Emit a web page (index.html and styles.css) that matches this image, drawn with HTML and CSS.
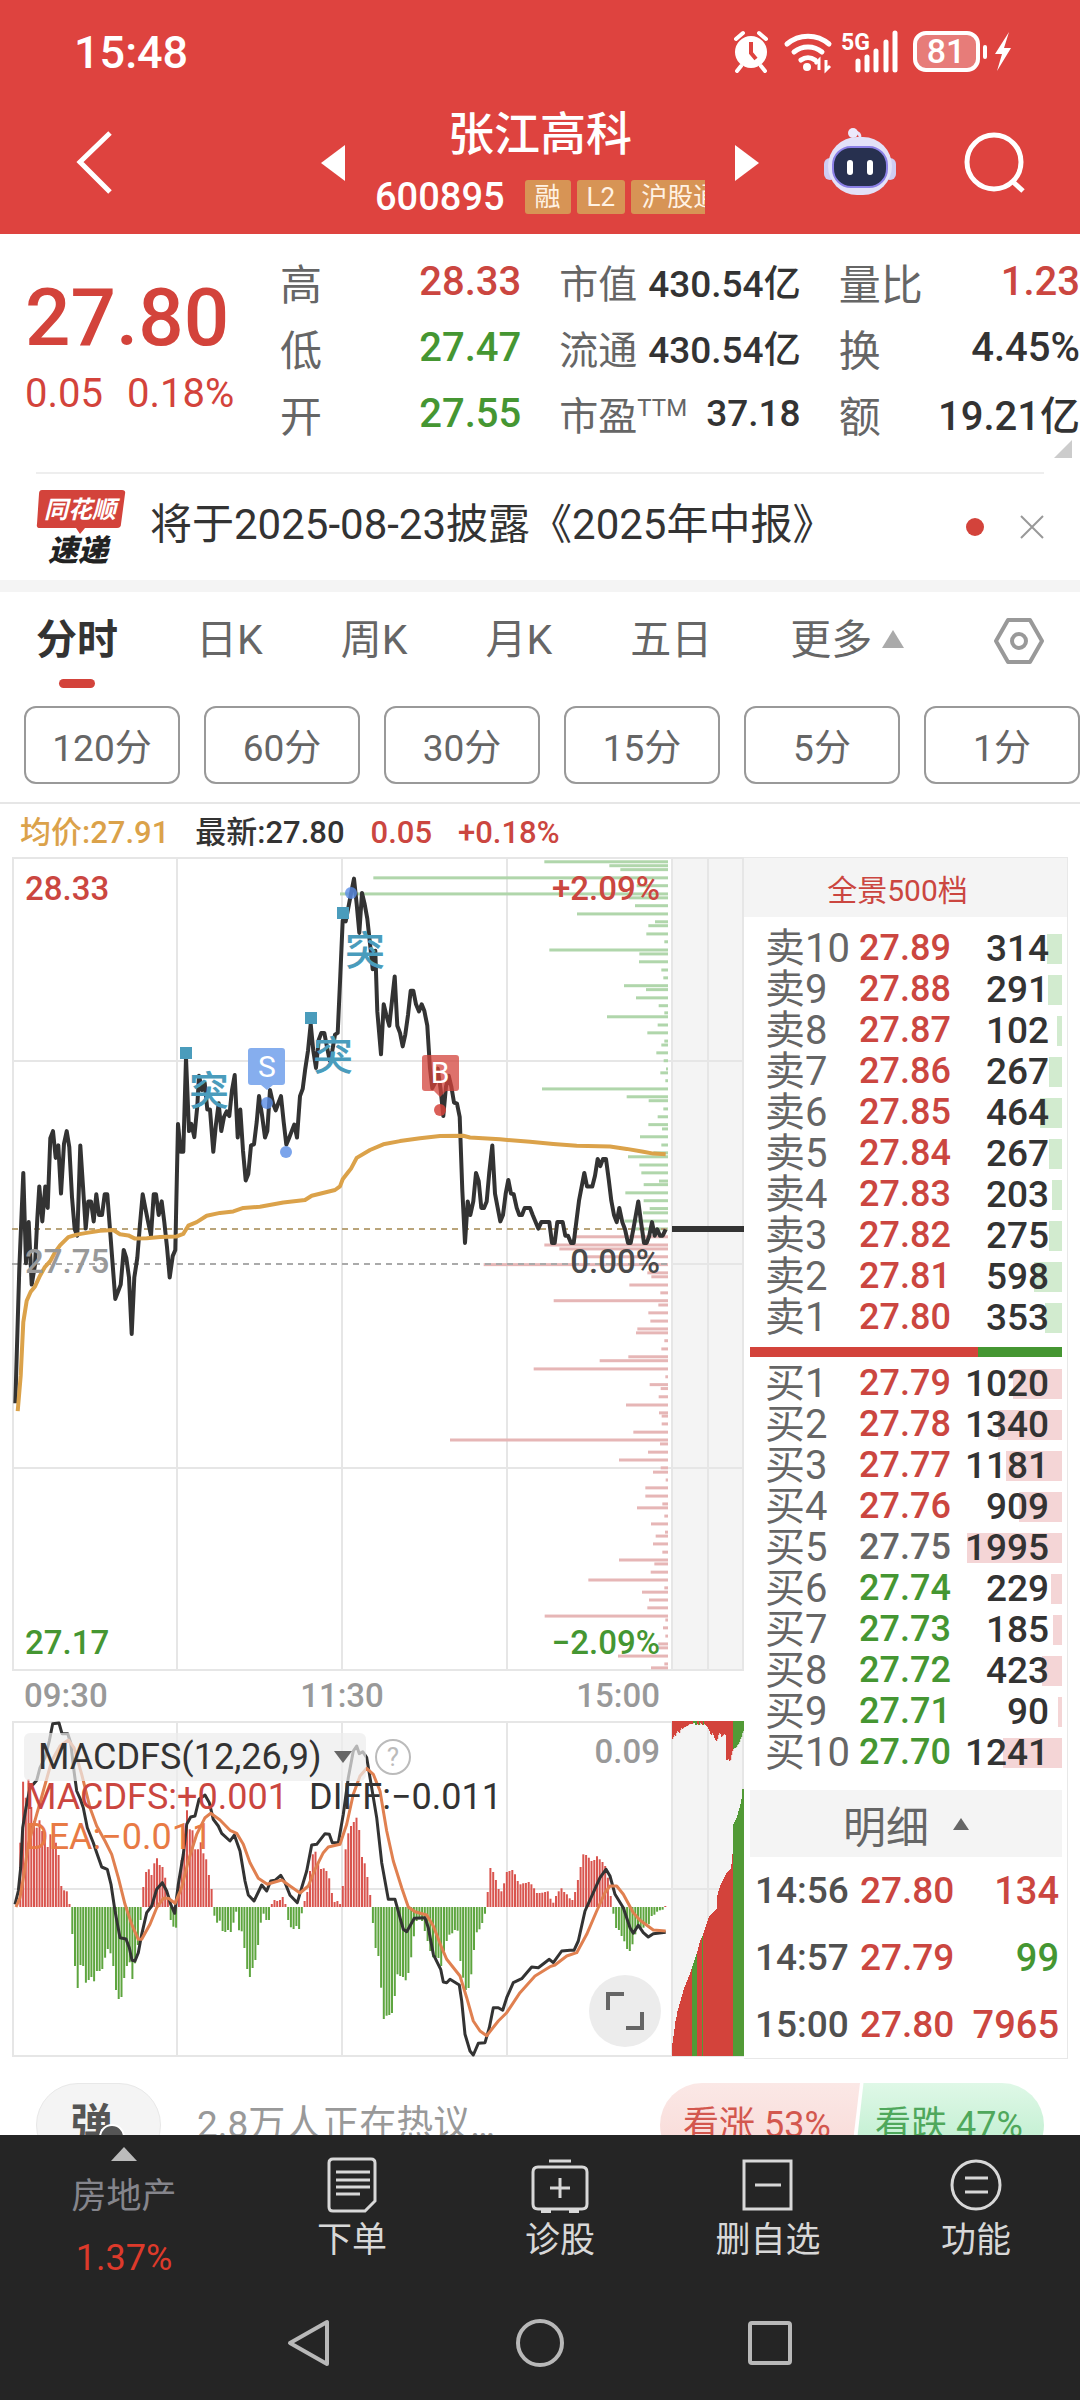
FILE: index.html
```html
<!DOCTYPE html>
<html lang="zh-CN">
<head>
  <meta charset="UTF-8">
  <meta name="viewport" content="width=device-width,initial-scale=1">
  <title>张江高科 600895</title>
  <link rel="stylesheet" href="styles.css">
</head>
<body>
<header class="top">
  <div class="status">
    <span class="clock">15:48</span>
    <svg class="status-icons" viewBox="0 0 284 44" width="284" height="44" aria-hidden="true">
      <!-- alarm -->
      <circle cx="17" cy="22" r="16" fill="#fff"/>
      <path d="M2 9 9 3M32 9l-7-6M7 36l-4 5M27 36l4 5" stroke="#fff" stroke-width="4" stroke-linecap="round"/>
      <path d="M17 12v11l5 6" fill="none" stroke="#de433f" stroke-width="4"/>
      <!-- wifi -->
      <path d="M53 14a32 32 0 0 1 42 0M60 22a22 22 0 0 1 28 0M67 30a12 12 0 0 1 14 0" fill="none" stroke="#fff" stroke-width="5" stroke-linecap="round"/>
      <circle cx="73" cy="37" r="4" fill="#fff"/>
      <path d="M85 40V30l-4 4M92 30v10l4-4" fill="none" stroke="#fff" stroke-width="3"/>
      <!-- signal -->
      <text x="107" y="20" class="net">5G</text>
      <path d="M124 40v-9M133 40v-13M142 40V21M152 40V12M161 40V3" stroke="#fff" stroke-width="5" stroke-linecap="round"/>
      <!-- battery -->
      <rect x="181" y="3" width="63" height="37" rx="11" fill="#e77c79" stroke="#fff" stroke-width="4"/>
      <text x="212" y="33" class="batt">81</text>
      <rect x="249" y="15" width="4" height="14" rx="2" fill="#fff"/>
      <path d="M275 2l-14 22h7l-5 17 14-23h-7z" fill="#fff"/>
    </svg>
  </div>
  <div class="title-row">
    <div class="side">
      <button class="icon-btn" aria-label="返回">
        <svg viewBox="0 0 40 68" width="40" height="68"><path d="M36 4 6 33l30 30" fill="none" stroke="#fff" stroke-width="5"/></svg>
      </button>
    </div>
    <div class="switcher">
      <button class="icon-btn" aria-label="上一只"><svg viewBox="0 0 24 36" width="24" height="36"><path d="M24 0v36L0 18z" fill="#fff"/></svg></button>
      <div class="stock">
        <h1>张江高科</h1>
        <div class="stock-sub">
          <span class="code">600895</span>
          <span class="tag">融</span>
          <span class="tag">L2</span>
          <span class="tag">沪股通</span>
        </div>
      </div>
      <button class="icon-btn" aria-label="下一只"><svg viewBox="0 0 24 36" width="24" height="36"><path d="M0 0v36l24-18z" fill="#fff"/></svg></button>
    </div>
    <div class="side right">
      <button class="icon-btn" aria-label="智能助手">
        <svg viewBox="0 0 72 72" width="72" height="72">
          <path d="M36 12q1-7-6-7" fill="none" stroke="#e8e4fa" stroke-width="3"/>
          <circle cx="29" cy="6" r="5" fill="#ece9fb"/>
          <rect x="0" y="31" width="12" height="22" rx="6" fill="#cfcdf3"/>
          <rect x="60" y="31" width="12" height="22" rx="6" fill="#cfcdf3"/>
          <rect x="4" y="10" width="64" height="58" rx="29" fill="#e3e1f8"/>
          <rect x="9" y="20" width="54" height="40" rx="18" fill="#27304f" stroke="#8b80e6" stroke-width="2"/>
          <rect x="23" y="33" width="6" height="15" rx="3" fill="#fff"/>
          <rect x="43" y="33" width="6" height="15" rx="3" fill="#fff"/>
        </svg>
      </button>
      <button class="icon-btn" aria-label="搜索">
        <svg viewBox="0 0 62 62" width="62" height="62"><circle cx="30" cy="30" r="27" fill="none" stroke="#fff" stroke-width="5"/><path d="M48 49l11 10" stroke="#fff" stroke-width="5"/></svg>
      </button>
    </div>
  </div>
</header>

<section class="quote">
  <div class="now">
    <div class="price">27.80</div>
    <div class="change"><span>0.05</span><span>0.18%</span></div>
  </div>
  <dl class="stats">
    <div><dt>高</dt><dd class="up">28.33</dd></div>
    <div class="md"><dt>市值</dt><dd>430.54亿</dd></div>
    <div><dt>量比</dt><dd class="up">1.23</dd></div>
    <div><dt>低</dt><dd class="down">27.47</dd></div>
    <div class="md"><dt>流通</dt><dd>430.54亿</dd></div>
    <div><dt>换</dt><dd>4.45%</dd></div>
    <div><dt>开</dt><dd class="down">27.55</dd></div>
    <div class="md"><dt>市盈<sup>TTM</sup></dt><dd>37.18</dd></div>
    <div><dt>额</dt><dd>19.21亿</dd></div>
  </dl>
  <span class="corner"></span>
</section>

<section class="news">
  <svg viewBox="0 0 92 74" width="92" height="74" role="img" aria-label="同花顺速递">
    <path d="M6 0h80q4 0 3 4l-4 30q0 4-4 4H49l-5 6-4-6H4q-4 0-3-4L3 4q0-4 3-4z" fill="#d3433b"/>
    <text x="44" y="28" class="logo-a">同花顺</text>
    <text x="42" y="71" class="logo-b">速递</text>
  </svg>
  <a class="headline" href="#news">将于2025-08-23披露《2025年中报》</a>
  <span class="dot"></span>
  <button class="icon-btn" aria-label="关闭"><svg viewBox="0 0 24 24" width="24" height="24"><path d="M1 1l22 22M23 1 1 23" stroke="#999" stroke-width="2"/></svg></button>
</section>

<nav class="tabs">
  <button class="tab active">分时</button>
  <button class="tab">日K</button>
  <button class="tab">周K</button>
  <button class="tab">月K</button>
  <button class="tab">五日</button>
  <button class="tab more">更多<svg viewBox="0 0 22 18" width="22" height="18"><path d="M11 0l11 18H0z" fill="#aaa"/></svg></button>
  <button class="tab setting" aria-label="设置">
    <svg viewBox="0 0 50 46" width="50" height="46" fill="none" stroke="#999" stroke-width="4"><path d="M14 2h22l12 21-12 21H14L2 23z" stroke-linejoin="round"/><circle cx="25" cy="23" r="7"/></svg>
  </button>
</nav>

<div class="periods">
  <button>120分</button>
  <button>60分</button>
  <button>30分</button>
  <button>15分</button>
  <button>5分</button>
  <button>1分</button>
</div>

<div class="legend">
  <span class="avg">均价:27.91</span>
  <span>最新:27.80</span>
  <span class="up">0.05</span>
  <span class="up">+0.18%</span>
</div>

<main class="board">
  <div class="charts">
    <svg id="trend" viewBox="12 17 732 814" role="img" aria-label="分时走势">
      <rect x="672" y="18" width="72" height="813" fill="#f4f4f4"/>
      <g class="grid">
        <path d="M13 18V831M177 18V831M342 18V831M507 18V831M672 18V831M708 18V831M743 18V831"/>
        <path d="M12 18H744M12 221H744M672 424H744M12 628H744M12 830H744"/>
      </g>
      <g id="levels"></g>
      <path d="M12 389H670" stroke="#b9a47a" stroke-width="2" stroke-dasharray="6 5"/>
      <path d="M12 424H670" stroke="#aaa" stroke-width="2" stroke-dasharray="6 5"/>
      <path id="price-line" fill="none" stroke="#333" stroke-width="4" stroke-linejoin="round"/>
      <path id="avg-line" fill="none" stroke="#dba24a" stroke-width="4" stroke-linejoin="round"/>
      <path d="M672 389H744" stroke="#333" stroke-width="6"/>
      <g fill="#4a9cbc">
        <path d="M180 207h12v12h-12zM305 172h12v12h-12zM337 67h12v12h-12z"/>
        <text x="189" y="265" class="mark">突</text>
        <text x="313" y="230" class="mark">突</text>
        <text x="345" y="125" class="mark">突</text>
      </g>
      <g fill="#5a8de6" fill-opacity=".8">
        <circle cx="351" cy="53" r="6"/>
        <circle cx="267" cy="263" r="6"/>
        <circle cx="286" cy="312" r="6"/>
      </g>
      <path d="M251 208h31q3 0 3 3v31q0 3-3 3h-9l-6 5-6-5h-10q-3 0-3-3v-31q0-3 3-3z" fill="#86aeee"/>
      <text x="267" y="237" class="flag">S</text>
      <path d="M425 215h31q3 0 3 3v30q0 3-3 3h-10l-6 6-6-6h-9q-3 0-3-3v-30q0-3 3-3z" fill="#d3433b" fill-opacity=".75"/>
      <circle cx="440" cy="270" r="6" fill="#d3433b" fill-opacity=".85"/>
      <text x="440" y="243" class="flag">B</text>
      <text x="25" y="60" class="lab up">28.33</text>
      <text x="660" y="60" class="lab up end">+2.09%</text>
      <text x="25" y="433" class="lab flat">27.75</text>
      <text x="660" y="433" class="lab mid end">0.00%</text>
      <text x="25" y="814" class="lab down">27.17</text>
      <text x="660" y="814" class="lab down end">−2.09%</text>
    </svg>
    <div class="axis"><span>09:30</span><span>11:30</span><span>15:00</span></div>
    <div class="macd">
      <svg id="macd" viewBox="12 10 732 336" role="img" aria-label="MACDFS">
        <rect x="672" y="10" width="72" height="335" fill="#f4f4f4"/>
        <g class="grid">
          <path d="M13 10V345M177 10V345M342 10V345M507 10V345M672 10V345M708 10V345M743 10V345"/>
          <path d="M12 11H744M12 178H744M12 345H744"/>
        </g>
        <g id="macd-bars"></g>
        <path id="diff-line" fill="none" stroke="#333" stroke-width="3" stroke-linejoin="round"/>
        <path id="dea-line" fill="none" stroke="#e08050" stroke-width="3" stroke-linejoin="round"/>
        <g id="auction"></g>
        <text x="25" y="98" class="ind up">MACDFS:+0.001</text>
        <text x="309" y="98" class="ind">DIFF:−0.011</text>
        <text x="25" y="138" class="ind dea">DEA:−0.011</text>
        <text x="660" y="52" class="lab flat end">0.09</text>
      </svg>
      <button class="ind-name">MACDFS(12,26,9)<svg viewBox="0 0 18 12" width="18" height="12"><path d="M0 0h18l-9 12z" fill="#666"/></svg></button>
      <button class="help" aria-label="说明">?</button>
      <button class="expand" aria-label="全屏"><svg viewBox="0 0 38 38" width="38" height="38" fill="none" stroke="#666" stroke-width="4"><path d="M2 18V2h16M36 20v16H20"/></svg></button>
    </div>
  </div>

  <aside class="orders">
    <button class="all-levels">全景500档</button>
    <table class="book" id="sell"><tbody></tbody></table>
    <div class="ratio"><span class="buy" style="width:73%"></span></div>
    <table class="book" id="buy"><tbody></tbody></table>
    <button class="detail-head">明细<svg viewBox="0 0 16 12" width="16" height="12"><path d="M8 0l8 12H0z" fill="#666"/></svg></button>
    <table class="trades">
      <tr><td>14:56</td><td class="up">27.80</td><td class="up">134</td></tr>
      <tr><td>14:57</td><td class="up">27.79</td><td class="down">99</td></tr>
      <tr><td>15:00</td><td class="up">27.80</td><td class="up">7965</td></tr>
    </table>
  </aside>
</main>

<section class="talk">
  <button class="danmu" aria-label="弹幕开关">弹<i></i></button>
  <span class="talk-text">2.8万人正在热议…</span>
  <div class="vote">
    <button class="bull">看涨 53%</button>
    <button class="bear">看跌 47%</button>
  </div>
</section>

<footer>
  <nav class="actions">
    <a class="sector" href="#sector">
      <svg viewBox="0 0 26 14" width="26" height="14"><path d="M13 0l13 14H0z" fill="#bbb"/></svg>
      <span>房地产</span>
      <b>1.37%</b>
    </a>
    <a href="#order">
      <svg viewBox="0 0 56 56" width="56" height="56"><path d="M9 2h38q4 0 4 4v38L41 54H9q-4 0-4-4V6q0-4 4-4zM12 15h34M12 23h34M12 30h34M12 37h24"/></svg>
      <span>下单</span>
    </a>
    <a href="#diagnose">
      <svg viewBox="0 0 60 56" width="60" height="56"><path d="M19 4h22M8 10h44q5 0 5 5v32q0 5-5 5H8q-5 0-5-5V15q0-5 5-5zM30 21v20M20 31h20"/><path d="M11 54h10M39 54h10" stroke-width="4"/></svg>
      <span>诊股</span>
    </a>
    <a href="#remove">
      <svg viewBox="0 0 56 56" width="56" height="56"><path d="M4 4h47v48H4zM15 28h26"/></svg>
      <span>删自选</span>
    </a>
    <a href="#more">
      <svg viewBox="0 0 56 56" width="56" height="56"><circle cx="28" cy="28" r="24"/><path d="M17 21h23M17 35h23"/></svg>
      <span>功能</span>
    </a>
  </nav>
  <div class="sysnav">
    <button class="icon-btn" aria-label="后退"><svg viewBox="0 0 48 48" width="48" height="48"><path d="M41 3v42L4 24z"/></svg></button>
    <button class="icon-btn" aria-label="主屏"><svg viewBox="0 0 48 48" width="48" height="48"><circle cx="24" cy="24" r="22"/></svg></button>
    <button class="icon-btn" aria-label="最近"><svg viewBox="0 0 48 48" width="48" height="48"><rect x="4" y="4" width="40" height="40" rx="2"/></svg></button>
  </div>
</footer>
<script src="script.js"></script>
</body>
</html>
```

FILE: styles.css
```css
* { box-sizing: border-box; margin: 0; padding: 0 }
body {
  font-family: Roboto, "Noto Sans CJK SC", sans-serif;
  background: #fff;
  color: #333;
  overflow-x: hidden;
}
button {
  font: inherit;
  color: inherit;
  background: none;
  border: 0;
}
a { color: inherit; text-decoration: none }
svg { display: block }
.icon-btn { display: flex }
.up { color: #cb4640; fill: #cb4640 }
.down { color: #459632; fill: #459632 }

/* header */
.top { background: #de433f; color: #fff; padding-bottom: 12px }
.status {
  display: flex;
  justify-content: space-between;
  align-items: center;
  height: 104px;
  padding: 0 62px 0 74px;
}
.clock { font-size: 45px; font-weight: 500 }
.net { font-size: 23px; font-weight: 700; fill: #fff }
.batt { font-size: 34px; font-weight: 500; fill: #fff; text-anchor: middle }
.title-row {
  display: grid;
  grid-template-columns: 1fr auto 1fr;
  align-items: center;
  height: 118px;
}
.side { padding-left: 74px }
.side.right {
  display: flex;
  align-items: center;
  justify-content: flex-end;
  gap: 68px;
  padding: 0 54px 0 0;
}
.switcher { display: flex; align-items: center; gap: 30px }
.stock { width: 330px; text-align: center }
.stock h1 { font-size: 46px; font-weight: 500; line-height: 60px }
.stock-sub {
  display: flex;
  align-items: center;
  gap: 6px;
  height: 58px;
  padding-top: 8px;
  overflow: hidden;
  white-space: nowrap;
}
.code { font-size: 38px; font-weight: 500; margin-right: 14px }
.tag {
  flex: none;
  font-size: 26px;
  line-height: 34px;
  padding: 0 10px;
  background: #d79455;
  color: #fff2e4;
  border-radius: 3px;
}

/* quote */
.quote { position: relative; display: flex; height: 238px; padding-top: 14px }
.now { width: 280px; padding-left: 25px; color: #d3433b }
.price { font-size: 80px; font-weight: 500; line-height: 92px; margin-top: 24px }
.change { display: flex; gap: 24px; font-size: 40px; line-height: 60px }
.stats {
  flex: 1;
  display: grid;
  grid-template-columns: repeat(3, 1fr);
  grid-auto-rows: 66px;
  column-gap: 38px;
}
.stats div { display: flex; justify-content: space-between; align-items: center; white-space: nowrap }
.stats dt { font-size: 42px; color: #666 }
.stats dd { font-size: 40px; font-weight: 500 }
.stats .md dt { font-size: 39px }
.stats .md dd { font-size: 37px }
.stats sup { font-size: 24px; vertical-align: 14px; line-height: 1 }
.corner {
  position: absolute;
  right: 8px;
  bottom: 14px;
  border-left: 18px solid transparent;
  border-bottom: 18px solid #ccc;
}

/* news */
.news {
  display: flex;
  align-items: center;
  height: 108px;
  margin: 0 36px;
  border-top: 2px solid #eee;
}
.logo-a { font-size: 24px; font-weight: 700; font-style: italic; fill: #fff; text-anchor: middle }
.logo-b { font-size: 30px; font-weight: 900; font-style: italic; fill: #222; text-anchor: middle }
.headline { flex: 1; margin-left: 22px; font-size: 42px; line-height: 60px; padding-bottom: 4px; white-space: nowrap }
.dot { width: 18px; height: 18px; border-radius: 50%; background: #d3433b; margin-right: 36px }

/* period tabs */
.tabs {
  display: flex;
  gap: 78px;
  padding: 0 36px;
  height: 126px;
  border-top: 12px solid #f4f4f4;
}
.tab {
  display: flex;
  flex-direction: column;
  align-items: center;
  height: 96px;
  padding-top: 18px;
  font-size: 41px;
  line-height: 60px;
  color: #666;
  white-space: nowrap;
}
.tab.active { color: #333; font-weight: 700 }
.tab.active::after {
  content: "";
  width: 36px;
  height: 9px;
  margin-top: 9px;
  border-radius: 5px;
  background: #d3433b;
}
.tab.more { flex-direction: row; align-items: flex-start; gap: 10px }
.tab.more svg { margin-top: 20px }
.tab.setting { margin-left: auto; padding-top: 26px }
.periods { display: flex; gap: 24px; padding: 0 0 18px 24px; border-bottom: 2px solid #e6e6e6 }
.periods button {
  flex: 1;
  height: 78px;
  border: 2px solid #999;
  border-radius: 12px;
  font-size: 37px;
  color: #666;
}
.legend {
  display: flex;
  gap: 26px;
  height: 53px;
  padding: 0 20px;
  font-size: 31px;
  font-weight: 500;
  line-height: 58px;
}
.legend .avg { color: #dba24a }

/* charts */
.board { display: grid; grid-template-columns: 1fr 324px; padding: 0 12px }
.charts > svg, .macd > svg { width: 100%; height: auto }
.grid { fill: none; stroke: #e6e6e6; stroke-width: 2 }
.lab { font-size: 33px; font-weight: 500 }
.end { text-anchor: end }
.flat { fill: #999 }
.mid { fill: #4a4a4a }
.mark { font-size: 40px; font-weight: 500 }
.flag { font-size: 30px; fill: #fff; text-anchor: middle }
.axis {
  display: flex;
  justify-content: space-between;
  padding: 0 84px 0 12px;
  font-size: 33px;
  font-weight: 500;
  line-height: 50px;
  color: #999;
}
.macd { position: relative }
.ind { font-size: 36px }
.ind:not(.up) { fill: #333 }
.ind.ind.dea { fill: #e87a45 }
.ind-name {
  position: absolute;
  left: 12px;
  top: 12px;
  display: flex;
  align-items: center;
  gap: 12px;
  height: 48px;
  padding: 0 14px;
  font-size: 36px;
  background: rgba(236, 236, 236, .7);
  border-radius: 6px;
}
.help {
  position: absolute;
  left: 363px;
  top: 18px;
  width: 36px;
  height: 36px;
  border: 2px solid #bbb;
  border-radius: 50%;
  font-size: 26px;
  line-height: 32px;
  color: #bbb;
}
.expand {
  position: absolute;
  right: 83px;
  bottom: 10px;
  width: 72px;
  height: 72px;
  border-radius: 50%;
  background: #ececec;
  display: flex;
  align-items: center;
  justify-content: center;
}

/* order book */
.orders { border: 1px solid #e8e8e8; border-left: 0 }
.all-levels {
  width: 100%;
  height: 59px;
  padding-right: 16px;
  background: #f4f4f4;
  color: #cb4640;
  font-size: 30px;
}
.orders table { border-collapse: collapse; width: 100% }
.book { table-layout: fixed; margin-top: 11px }
.book td { height: 41px; line-height: 41px; white-space: nowrap }
.book td:first-child { width: 115px; padding-left: 21px; font-size: 40px; color: #666 }
.book .p { width: 92px; font-size: 36px; font-weight: 500 }
.book .p.same { color: #666 }
.qty { position: relative; padding-right: 18px; text-align: right; font-size: 37px; font-weight: 500 }
.qty i { position: absolute; right: 5px; top: 6px; height: 30px; z-index: -1 }
#sell i { background: #d2ebcf }
#buy i { background: #f4d5d6 }
.ratio { height: 10px; margin: 9px 5px 0 6px; background: #459632 }
.ratio .buy { display: block; height: 100%; background: #d3433b }
#buy { margin-top: 6px }
.detail-head {
  display: flex;
  align-items: center;
  justify-content: center;
  gap: 24px;
  min-width: 312px;
  height: 67px;
  margin: 17px 5px 0 6px;
  background: #f4f4f4;
  color: #666;
  font-size: 43px;
}
.trades td { height: 67px; font-size: 37px; font-weight: 500; color: #505050 }
.trades td.up { color: #cb4640 }
.trades td.down { color: #459632 }
.trades td:first-child { width: 116px; padding-left: 11px }
.trades td:last-child { text-align: right; padding-right: 8px; font-size: 38px }

/* comments strip, covered by the footer */
.talk {
  display: flex;
  align-items: flex-start;
  height: 76px;
  padding: 24px 36px 0;
  overflow: hidden;
}
.danmu {
  position: relative;
  flex: none;
  width: 125px;
  height: 84px;
  border: 1px solid #e8e8e8;
  border-radius: 42px;
  background: #f4f4f4;
  font-size: 42px;
  font-weight: 700;
  line-height: 76px;
  padding-right: 14px;
  color: #555;
}
.danmu i {
  position: absolute;
  left: 62px;
  top: 40px;
  width: 26px;
  height: 26px;
  border: 2px solid #fff;
  border-radius: 50%;
  background: #555;
}
.talk-text { flex: 1; margin-left: 36px; font-size: 37px; line-height: 84px; color: #999 }
.vote { display: flex; font-size: 36px }
.vote button { height: 84px; line-height: 84px }
.bull {
  width: 200px;
  padding-right: 6px;
  border-radius: 42px 0 0 42px;
  background: linear-gradient(#fbe8e6, #f8d8d5);
  clip-path: polygon(0 0, 100% 0, 95% 100%, 0 100%);
  color: #d3574e;
}
.bear {
  width: 190px;
  margin-left: -6px;
  border-radius: 0 42px 42px 0;
  background: linear-gradient(#dff8e7, #b8ecca);
  clip-path: polygon(5% 0, 100% 0, 100% 100%, 0 100%);
  color: #4fa85c;
}

/* footer */
footer { position: relative; height: 267px; background: #252525; color: #d8d8d8 }
.actions { display: grid; grid-template-columns: 248px repeat(4, 1fr) }
.actions a { display: flex; flex-direction: column; align-items: center; padding-top: 22px; font-size: 35px; line-height: 56px }
.actions svg { fill: none; stroke: #d8d8d8; stroke-width: 3 }
.actions a.sector { padding-top: 12px; color: #85858c }
.actions .sector svg { stroke: none }
.sector span { margin-top: 8px }
.sector b { font-size: 36px; font-weight: 400; line-height: 66px; color: #dd3a2b }
.sysnav { display: flex; justify-content: center; gap: 182px; margin-top: 28px }
.sysnav svg { fill: none; stroke: #b8b8b8; stroke-width: 4; stroke-linejoin: round }
```

FILE: script.js
```js
const NS = 'http://www.w3.org/2000/svg';
const byId = id => document.getElementById(id);

// samples are flat x,y lists; sx / sy are units per chart pixel
function toPath(flat, sx, sy) {
  let d = '';
  for (let i = 0; i < flat.length; i += 2) {
    d += (i ? 'L' : 'M') + (flat[i] / sx).toFixed(1) + ' ' + (flat[i + 1] / sy).toFixed(1);
  }
  return d;
}
function add(parent, tag, attrs) {
  const el = document.createElementNS(NS, tag);
  for (const k in attrs) el.setAttribute(k, attrs[k]);
  parent.appendChild(el);
}

const price = [46,1577,58,1200,70,932,78,1185,86,1070,95,1245,105,1190,112,1060,118,970,127,1068,136,970,143,1030,151,835,159,815,
  167,890,175,855,183,990,192,850,200,815,208,860,216,1000,224,1090,232,1108,241,855,249,970,257,1088,265,1012,273,1012,281,1068,
  289,992,297,1050,306,1050,314,992,322,992,330,1090,338,1190,346,1285,354,1265,362,1245,371,1148,379,1170,387,1225,395,1383,
  403,1225,412,1170,420,1075,428,992,436,1030,444,1068,453,1108,461,992,468,992,476,1050,485,1012,493,1070,501,1140,509,1225,
  518,1165,526,1148,534,795,542,873,550,873,558,610,567,815,574,795,583,832,592,745,597,660,606,700,614,680,622,755,630,755,
  640,873,648,795,656,737,664,815,672,775,680,760,688,773,696,700,704,658,713,833,721,755,729,870,737,953,745,935,753,855,
  762,852,770,790,777,717,786,770,795,833,802,815,810,700,819,737,827,757,835,737,843,717,851,790,859,853,867,835,875,815,
  883,797,891,833,900,717,908,697,916,640,924,590,932,515,940,590,948,638,956,560,964,540,973,540,981,580,989,618,997,590,
  1005,545,1013,540,1021,380,1028,225,1037,228,1045,190,1053,150,1062,108,1070,180,1078,260,1086,148,1094,180,1102,220,
  1110,290,1118,362,1126,310,1132,480,1143,600,1151,460,1159,490,1168,520,1176,450,1184,382,1192,520,1200,540,1208,578,
  1216,545,1224,490,1232,422,1240,422,1248,460,1257,480,1265,460,1273,478,1282,520,1290,640,1297,695,1305,680,1313,640,
  1322,700,1330,773,1338,690,1346,660,1354,690,1362,735,1371,738,1379,775,1387,980,1395,1128,1403,1012,1411,1050,1420,1012,
  1428,932,1436,955,1444,1030,1452,1030,1460,1012,1468,930,1477,855,1485,990,1493,1030,1501,1068,1509,1050,1517,990,1525,952,
  1533,990,1541,992,1550,1030,1558,1050,1566,1050,1574,1030,1590,1030,1598,1050,1615,1088,1624,1070,1648,1070,1656,1128,
  1664,1128,1672,1070,1688,1070,1696,1108,1704,1108,1713,1128,1721,1128,1729,1070,1737,1010,1753,932,1761,970,1777,970,
  1785,940,1793,893,1801,913,1809,893,1818,893,1826,950,1834,1010,1842,1050,1850,1070,1858,1030,1867,1070,1875,1090,
  1884,1128,1892,1128,1900,1090,1915,1012,1923,1070,1932,1128,1940,1128,1948,1108,1956,1070,1964,1108,1972,1090,1980,1108,
  1988,1108,1997,1090];
const avg = [53,1599,62,1500,70,1350,80,1290,92,1265,105,1250,120,1220,135,1195,150,1180,165,1155,180,1135,205,1112,230,1105,
  260,1100,300,1094,340,1092,360,1104,385,1107,405,1116,440,1115,480,1112,530,1110,550,1103,565,1080,590,1070,620,1052,660,1044,
  700,1040,730,1030,780,1027,850,1015,915,1008,935,996,1005,980,1020,970,1028,950,1045,930,1053,920,1070,890,1110,868,1150,852,
  1200,843,1260,835,1320,829,1390,828,1410,833,1500,838,1590,845,1660,851,1730,856,1830,858,1880,865,1930,873,1960,878,1997,880];
byId('price-line').setAttribute('d', toPath(price, 3, 2.8));
byId('avg-line').setAttribute('d', toPath(avg, 3, 2.8));

// volume by price level: y, length
const sellLevels = [61,371,72,176,83,143,106,884,128,94,151,984,162,118,184,99,207,273,229,39,240,59,263,65,285,11,308,356,319,86,
  341,87,364,20,386,14,408,132,419,66,442,96,464,28,484,11,495,183,518,31,540,62,563,11,574,20,596,35,618,13,641,6,652,23,674,8,
  697,378,719,124,730,58,753,14,775,31,797,59,809,18,831,84,854,20,876,44,887,120,910,86,932,80,955,27,965,73,988,128,1010,73,
  1032,55,1044,75,1067,131,1089,104];
const buyLevels = [1111,284,1134,371,1145,326,1167,244,1189,553,1212,62,1223,50,1246,116,1268,23,1290,343,1302,29,1324,59,1347,53,
  1369,92,1380,96,1402,11,1425,20,1447,119,1458,205,1481,403,1503,8,1525,55,1536,22,1559,28,1582,126,1604,27,1613,19,1635,19,
  1658,104,1680,654,1691,24,1714,60,1736,147,1758,22,1770,45,1792,7,1814,68,1837,68,1859,17,1870,93,1893,11,1915,51,1938,9,
  1949,37,1971,45,1994,17,2016,147,2027,41,2050,52,2072,239,2094,11,2106,78,2128,57,2150,62,2173,370,2184,8,2206,15,2229,8,
  2251,29,2262,29,2285,150,2307,11,2318,51];
function drawLevels(list, color) {
  for (let i = 0; i < list.length; i += 2) {
    const w = list[i + 1] / 3;
    add(byId('levels'), 'rect', { x: 668 - w, y: list[i] / 2.8 - 1.5, width: w, height: 3, fill: color });
  }
}
drawLevels(sellLevels, '#b0d6ab');
drawLevels(buyLevels, '#e6b6b6');

// MACD histogram tips, zero line at 588
const tips = [395,212,260,205,288,330,350,328,360,365,408,370,358,395,432,525,538,541,579,669,765,831,762,765,815,807,798,811,
  780,780,774,740,714,727,765,837,864,858,801,765,754,804,757,702,627,528,483,475,492,457,442,462,468,500,560,627,647,650,500,
  447,385,298,355,358,415,415,394,427,445,492,534,614,635,629,660,663,657,663,635,602,658,661,711,774,798,771,747,702,635,608,
  627,627,579,567,570,567,558,579,627,649,654,645,654,607,570,543,480,430,422,455,474,472,480,502,546,573,570,579,525,415,367,
  345,333,320,357,438,457,498,552,636,711,735,830,924,914,912,906,855,790,795,798,808,786,739,676,630,625,630,660,690,720,739,
  739,741,765,720,690,671,667,657,659,750,800,837,831,790,717,664,655,636,608,543,471,483,507,534,541,517,483,480,477,490,510,
  520,517,516,513,520,532,546,546,545,543,541,563,575,555,541,532,543,550,562,567,543,507,468,430,432,440,450,447,436,445,453,
  465,500,555,608,651,657,675,691,714,720,700,670,650,655,650,645,640,615,611,602,598,596,585];
const step = (1996 - 61) / (tips.length - 1);
tips.forEach((t, i) => {
  const x = (61 + i * step) / 3;
  add(byId('macd-bars'), 'path', {
    d: `M${x.toFixed(1)} 196V${(t / 3).toFixed(1)}`,
    stroke: t < 588 ? '#d9544e' : '#5ea53f',
    'stroke-width': 2
  });
});

const diff = [45,580,55,540,62,470,68,350,78,290,90,230,100,220,110,208,120,170,135,140,148,90,158,38,177,36,186,68,203,68,212,95,
  222,180,230,240,240,262,250,290,262,350,280,395,290,425,305,468,322,475,333,520,345,600,360,680,378,684,388,710,396,748,405,750,
  415,725,425,670,440,605,455,585,470,535,487,515,500,540,512,580,524,607,535,520,550,430,560,340,572,318,585,315,597,265,615,252,
  628,275,640,325,655,345,665,367,690,390,703,372,720,420,735,510,745,552,762,570,785,522,800,540,812,510,825,508,842,493,855,515,
  870,553,892,575,905,530,920,480,935,402,950,400,975,368,988,370,997,395,1015,395,1030,310,1045,200,1060,120,1070,105,1078,128,
  1088,122,1100,140,1115,230,1130,320,1145,455,1165,565,1185,565,1200,620,1210,655,1220,662,1243,622,1275,620,1285,650,1300,730,
  1322,775,1330,813,1340,815,1350,805,1378,822,1385,870,1395,970,1410,1020,1420,1032,1435,997,1455,995,1468,950,1480,890,1495,890,
  1508,898,1520,860,1540,815,1565,803,1595,768,1615,770,1648,745,1660,755,1685,720,1710,718,1722,718,1735,690,1755,600,1780,545,
  1800,500,1818,475,1830,495,1845,550,1870,590,1890,650,1900,667,1915,643,1930,665,1945,678,1960,668,1997,664];
const dea = [48,588,60,560,72,490,85,400,110,310,130,240,155,150,180,105,205,87,222,110,245,190,270,290,290,345,315,390,335,430,
  355,500,375,580,395,640,415,685,425,685,450,640,470,590,490,562,505,562,525,577,545,530,565,450,590,370,615,320,632,307,660,327,
  690,358,710,367,730,400,750,455,775,502,802,520,845,507,870,525,900,546,925,525,945,475,970,425,985,408,1020,400,1040,340,
  1060,250,1080,195,1100,172,1120,190,1140,240,1160,360,1180,450,1205,530,1225,588,1245,602,1280,612,1300,645,1325,710,1340,745,
  1380,795,1400,860,1420,930,1440,960,1460,974,1495,930,1520,905,1560,845,1605,795,1650,767,1665,762,1700,735,1730,725,1760,670,
  1790,600,1815,545,1830,525,1850,525,1870,550,1900,605,1920,628,1960,657,1997,660];
byId('diff-line').setAttribute('d', toPath(diff, 3, 3));
byId('dea-line').setAttribute('d', toPath(dea, 3, 3));

// closing auction: one column per chart pixel, drawn from the bottom and from the top
const rise = [332,325,318,310,306,300,297,293,290,286,283,279,276,274,271,269,266,264,261,258,255,252,249,246,243,240,236,232,229,
  227,225,222,219,216,213,210,207,205,204,203,202,201,200,199,198,184,180,177,174,172,170,168,166,164,162,161,160,159,158,153,143,
  113,111,109,107,104,100,97,93,88,78,78];
const fall = [28,26,24,25,22,20,21,22,19,17,18,17,16,16,15,15,14,13,13,13,13,12,12,14,14,13,14,14,12,13,14,14,13,14,15,16,18,20,
  23,24,22,24,27,29,30,28,24,22,23,26,25,24,23,24,49,49,48,50,49,44,40,38,37,37,36,34,33,31,28,26,22,20];
rise.forEach((y, i) => {
  const green = i > 60 || (i > 19 && i < 25) || i === 30;
  add(byId('auction'), 'rect', { x: 672 + i, y, width: 1.2, height: 345 - y, fill: green ? '#529a36' : '#d3433b' });
  const topGreen = i > 60 || (i > 20 && i < 25) || i === 27 || i === 31;
  add(byId('auction'), 'rect', { x: 672 + i, y: 10, width: 1.2, height: fall[i] - 10, fill: topGreen ? '#529a36' : '#d3433b' });
});

// order book
const PREV_CLOSE = 27.75;
const sell = [314, 291, 102, 267, 464, 267, 203, 275, 598, 353];
const buy = [1020, 1340, 1181, 909, 1995, 229, 185, 423, 90, 1241];
function fillBook(id, rows) {
  byId(id).tBodies[0].innerHTML = rows.map(([name, p, qty]) => {
    const cls = p > PREV_CLOSE ? 'up' : p < PREV_CLOSE ? 'down' : 'same';
    return `<tr><td>${name}</td><td class="p ${cls}">${p.toFixed(2)}</td>
      <td class="qty"><i style="width:${Math.round(qty / 21)}px"></i>${qty}</td></tr>`;
  }).join('');
}
fillBook('sell', sell.map((q, i) => ['卖' + (10 - i), (2789 - i) / 100, q]));
fillBook('buy', buy.map((q, i) => ['买' + (i + 1), (2779 - i) / 100, q]));
```
